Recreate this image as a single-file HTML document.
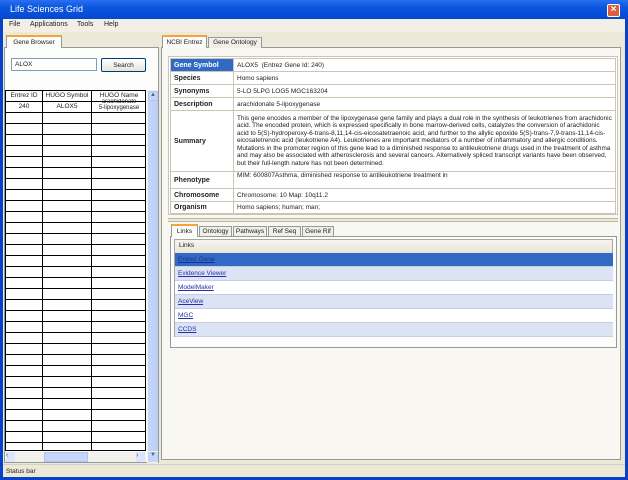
<!DOCTYPE html>
<html><head><meta charset="utf-8"><style>
*{margin:0;padding:0;box-sizing:border-box}
body{width:628px;height:480px;overflow:hidden;background:#0842c8;font-family:"Liberation Sans",sans-serif;font-size:7px;color:#222;position:relative}
.a{position:absolute;white-space:nowrap}
#title{left:0;top:0;width:628px;height:19px;background:linear-gradient(#2a6ff0,#0a55e0 40%,#0648d0);color:#fff;font-size:9px;padding:4px 0 0 10px}
#close{left:607px;top:4px;width:13px;height:13px;background:#d8603e;border:1px solid #fff;border-radius:2px;color:#fff;font-size:10px;line-height:10px;text-align:center;font-weight:bold}
#win{left:3px;top:19px;width:622px;height:458px;background:#ece9d8}
#menu{left:3px;top:19px;width:622px;height:13px;background:#f1efe6;font-size:7px}
#menu span{position:absolute;top:2px}
.tab{background:#fcfcfa;border:1px solid #919b9c;border-bottom:none;font-size:6.5px;padding:2px 0 0 0;text-align:center;overflow:hidden}
.tabsel{border-top:2px solid #f3a53b}
.line{background:#000}
table{border-collapse:collapse}
.info td{border:1px solid #c9c6b8;font-size:6.5px;padding:0 3px;background:#fff;vertical-align:middle}
.info td.l{font-weight:bold;font-size:7px;width:63px;background:#fff}
.lk{position:absolute;left:0;width:438px;height:14px;border-bottom:1px solid #c8cde0;font-size:6.5px;color:#2233aa;text-decoration:underline;padding:3px 0 0 3px}
</style></head><body>
<div id="title" class="a">Life Sciences Grid</div>
<div id="close" class="a">×</div>
<div id="win" class="a"></div>
<div id="menu" class="a"><span style="left:6px">File</span><span style="left:27px">Applications</span><span style="left:74px">Tools</span><span style="left:101px">Help</span></div>

<!-- left panel -->
<div class="a" style="left:4px;top:47px;width:155px;height:416px;background:#fcfcfa;border:1px solid #919b9c"></div>
<div class="a tab tabsel" style="left:6px;top:35px;width:56px;height:13px;background:#fcfcfa">Gene Browser</div>
<div class="a" style="left:11px;top:58px;width:86px;height:13px;background:#fff;border:1px solid #7f9db9;font-size:6.5px;padding:2px 3px">ALOX</div>
<div class="a" style="left:101px;top:58px;width:45px;height:14px;background:linear-gradient(#fff,#e6e4dc);border:1px solid #003c74;border-radius:2px;font-size:6.5px;text-align:center;padding-top:3px">Search</div>

<!-- grid -->
<div class="a" style="left:5px;top:90px;width:141px;height:361px;background:#fff;border:1px solid #000"></div>
<div class="a" style="left:5px;top:112px;width:141px;height:339px;background:repeating-linear-gradient(to bottom,#000 0 1px,transparent 1px 11px)"></div>
<div class="a line" style="left:5px;top:101px;width:141px;height:1px"></div>
<div class="a line" style="left:42px;top:90px;width:1px;height:361px"></div>
<div class="a line" style="left:91px;top:90px;width:1px;height:361px"></div>
<div class="a" style="left:6px;top:92px;width:36px;text-align:center;font-size:6.5px">Entrez ID</div>
<div class="a" style="left:43px;top:92px;width:48px;text-align:center;font-size:6.5px">HUGO Symbol</div>
<div class="a" style="left:92px;top:92px;width:54px;text-align:center;font-size:6.5px">HUGO Name</div>
<div class="a" style="left:6px;top:103px;width:36px;text-align:center;font-size:6.5px">240</div>
<div class="a" style="left:43px;top:103px;width:48px;text-align:center;font-size:6.5px">ALOX5</div>
<div class="a" style="left:92px;top:99px;width:54px;text-align:center;font-size:6px;line-height:6px;overflow:hidden;height:13px">arachidonate<br>5-lipoxygenase</div>
<!-- vertical scrollbar -->
<div class="a" style="left:147px;top:90px;width:11px;height:373px;background:#f3f1ec"></div>
<div class="a" style="left:148px;top:91px;width:10px;height:10px;background:#c5d4fb;border:1px solid #b4c6f0;font-size:6px;text-align:center;color:#4d6185">▲</div>
<div class="a" style="left:148px;top:101px;width:10px;height:350px;background:linear-gradient(90deg,#c8d6fb,#bacdf8)"></div>
<div class="a" style="left:148px;top:452px;width:10px;height:10px;background:#c5d4fb;font-size:6px;text-align:center;color:#4d6185">▼</div>
<!-- horizontal scrollbar -->
<div class="a" style="left:5px;top:452px;width:141px;height:10px;background:#f3f1ec"></div>
<div class="a" style="left:6px;top:452px;width:9px;height:10px;background:#dbe5fc;font-size:7px;color:#4d6185">‹</div>
<div class="a" style="left:44px;top:452px;width:44px;height:10px;background:#c6d5fb;border:1px solid #b0c2ee"></div>
<div class="a" style="left:136px;top:452px;width:9px;height:10px;background:#dbe5fc;font-size:7px;color:#4d6185">›</div>

<!-- right panel -->
<div class="a" style="left:161px;top:47px;width:460px;height:413px;background:#f8f7f2;border:1px solid #919b9c"></div>
<div class="a tab tabsel" style="left:162px;top:35px;width:45px;height:13px;background:#fcfcfa">NCBI Entrez</div>
<div class="a tab" style="left:208px;top:37px;width:54px;height:11px;background:#f1efe6;padding-top:1px">Gene Ontology</div>

<div class="a" style="left:168px;top:56px;width:450px;height:159px;background:#fff;border:1px solid #c9c6b8"></div>
<table class="info a" style="left:170px;top:58px;width:446px;white-space:normal">
<tr style="height:13px"><td class="l" style="background:#316ac5;color:#fff">Gene Symbol</td><td>ALOX5 &nbsp;(Entrez Gene Id: 240)</td></tr>
<tr style="height:13px"><td class="l">Species</td><td>Homo sapiens</td></tr>
<tr style="height:13px"><td class="l">Synonyms</td><td>5-LO 5LPG LOG5 MGC163204</td></tr>
<tr style="height:13px"><td class="l">Description</td><td>arachidonate 5-lipoxygenase</td></tr>
<tr style="height:61px"><td class="l">Summary</td><td style="font-size:6.4px;line-height:7.5px">This gene encodes a member of the lipoxygenase gene family and plays a dual role in the synthesis of leukotrienes from arachidonic acid. The encoded protein, which is expressed specifically in bone marrow-derived cells, catalyzes the conversion of arachidonic acid to 5(S)-hydroperoxy-6-trans-8,11,14-cis-eicosatetraenoic acid, and further to the allylic epoxide 5(S)-trans-7,9-trans-11,14-cis-eicosatetrenoic acid (leukotriene A4). Leukotrienes are important mediators of a number of inflammatory and allergic conditions. Mutations in the promoter region of this gene lead to a diminished response to antileukotriene drugs used in the treatment of asthma and may also be associated with atherosclerosis and several cancers. Alternatively spliced transcript variants have been observed, but their full-length nature has not been determined.</td></tr>
<tr style="height:17px"><td class="l">Phenotype</td><td style="vertical-align:top">MIM: 600807Asthma, diminished response to antileukotriene treatment in</td></tr>
<tr style="height:13px"><td class="l">Chromosome</td><td>Chromosome: 10 Map: 10q11.2</td></tr>
<tr style="height:12px"><td class="l">Organism</td><td>Homo sapiens; human; man;</td></tr>
</table>
<div class="a" style="left:168px;top:218px;width:450px;height:4px;border-top:1px solid #b9b59f;border-bottom:1px solid #b9b59f;background:#ece9d8"></div>

<!-- sub tabs -->
<div class="a" style="left:170px;top:236px;width:447px;height:112px;background:#fcfcfa;border:1px solid #919b9c"></div>
<div class="a tab tabsel" style="left:171px;top:224px;width:27px;height:13px">Links</div>
<div class="a tab" style="left:199px;top:226px;width:33px;height:10px;background:#f1efe6;padding-top:1px">Ontology</div>
<div class="a tab" style="left:233px;top:226px;width:34px;height:10px;background:#f1efe6;padding-top:1px">Pathways</div>
<div class="a tab" style="left:268px;top:226px;width:33px;height:10px;background:#f1efe6;padding-top:1px">Ref Seq</div>
<div class="a tab" style="left:302px;top:226px;width:32px;height:10px;background:#f1efe6;padding-top:1px">Gene Rif</div>
<div class="a" style="left:174px;top:239px;width:439px;height:98px;background:#fff;border:1px solid #aca899">
  <div class="a" style="left:0;top:0;width:437px;height:13px;background:linear-gradient(#f6f5f0,#e8e5d6);font-size:6.5px;padding:2px 4px">Links</div>
  <div class="lk" style="top:13px;background:#316ac5;color:#1c2f88">Entrez Gene</div>
  <div class="lk" style="top:27px;background:#dbe3f5">Evidence Viewer</div>
  <div class="lk" style="top:41px;background:#fff">ModelMaker</div>
  <div class="lk" style="top:55px;background:#dbe3f5">AceView</div>
  <div class="lk" style="top:69px;background:#fff">MGC</div>
  <div class="lk" style="top:83px;background:#dbe3f5">CCDS</div>
</div>

<!-- status -->
<div class="a" style="left:3px;top:464px;width:622px;height:13px;background:#ece9d8;border-top:1px solid #d6d2c2;font-size:6.5px;padding:3px 3px">Status bar</div>
</body></html>
